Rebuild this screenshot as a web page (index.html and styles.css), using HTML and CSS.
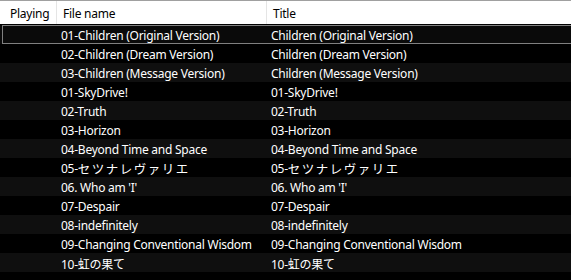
FILE: index.html
```html
<!DOCTYPE html>
<html lang="en">
<head>
    <meta charset="UTF-8">
    <title>Playlist</title>
    <link rel="stylesheet" href="styles.css">
</head>
<body>
    <div class="playlist">
        <div class="list-header">
            <div class="head-cell head-playing">Playing</div>
            <div class="head-cell">File name</div>
            <div class="head-cell head-title">Title</div>
        </div>

        <div class="list-body">
            <div class="row selected"><div></div><div class="cell">01-Children (Original Version)</div><div class="cell">Children (Original Version)</div></div>
            <div class="row"><div></div><div class="cell">02-Children (Dream Version)</div><div class="cell">Children (Dream Version)</div></div>
            <div class="row"><div></div><div class="cell">03-Children (Message Version)</div><div class="cell">Children (Message Version)</div></div>
            <div class="row"><div></div><div class="cell">01-SkyDrive!</div><div class="cell">01-SkyDrive!</div></div>
            <div class="row"><div></div><div class="cell">02-Truth</div><div class="cell">02-Truth</div></div>
            <div class="row"><div></div><div class="cell">03-Horizon</div><div class="cell">03-Horizon</div></div>
            <div class="row"><div></div><div class="cell">04-Beyond Time and Space</div><div class="cell">04-Beyond Time and Space</div></div>
            <div class="row"><div></div><div class="cell">05-<span class="kana">セツナレヴァリエ</span></div><div class="cell">05-<span class="kana">セツナレヴァリエ</span></div></div>
            <div class="row"><div></div><div class="cell">06. Who am 'I'</div><div class="cell">06. Who am 'I'</div></div>
            <div class="row"><div></div><div class="cell">07-Despair</div><div class="cell">07-Despair</div></div>
            <div class="row"><div></div><div class="cell">08-indefinitely</div><div class="cell">08-indefinitely</div></div>
            <div class="row"><div></div><div class="cell">09-Changing Conventional Wisdom</div><div class="cell">09-Changing Conventional Wisdom</div></div>
            <div class="row"><div></div><div class="cell">10-虹の果て</div><div class="cell">10-虹の果て</div></div>
        </div>
    </div>
</body>
</html>
```

FILE: styles.css
```css
* {
    margin: 0;
    padding: 0;
    box-sizing: border-box;
}

body {
    font-family: 'Noto Sans', 'Noto Sans CJK JP', sans-serif;
    font-size: 12px;
    letter-spacing: -0.25px;
    background: #000;
    height: 280px;
    overflow: hidden;
}

.playlist {
    border-top: 1px solid #a0a0a0;
}

/* column header */
.list-header {
    display: grid;
    grid-template-columns: 57px 210px 1fr;
    height: 23px;
    background: #fff;
    color: #000;
}

.head-cell {
    display: flex;
    align-items: center;
    padding: 2px 0 0 6px;
    border-right: 1px solid #e5e5e5;
}

.head-playing {
    padding-left: 10px;
}

.head-title {
    border-right: none;
}

/* rows */
.list-body {
    padding-top: 1px;
}

.row {
    position: relative;
    display: grid;
    grid-template-columns: 56px 210px 1fr;
    height: 19px;
    color: #fff;
    background: #000;
}

.row:nth-child(odd) {
    background: #0f0f0f;
}

.row.selected {
    background: #0a0a0a;
}

.row.selected::after {
    content: '';
    position: absolute;
    top: 0;
    bottom: 0;
    left: 2px;
    right: -1px;
    border: 1px solid #808080;
}

.cell {
    display: flex;
    align-items: center;
    padding: 2px 0 0 5px;
    white-space: nowrap;
    overflow: hidden;
}

.kana {
    font-size: 12.5px;
    letter-spacing: 1.5px;
}
```
